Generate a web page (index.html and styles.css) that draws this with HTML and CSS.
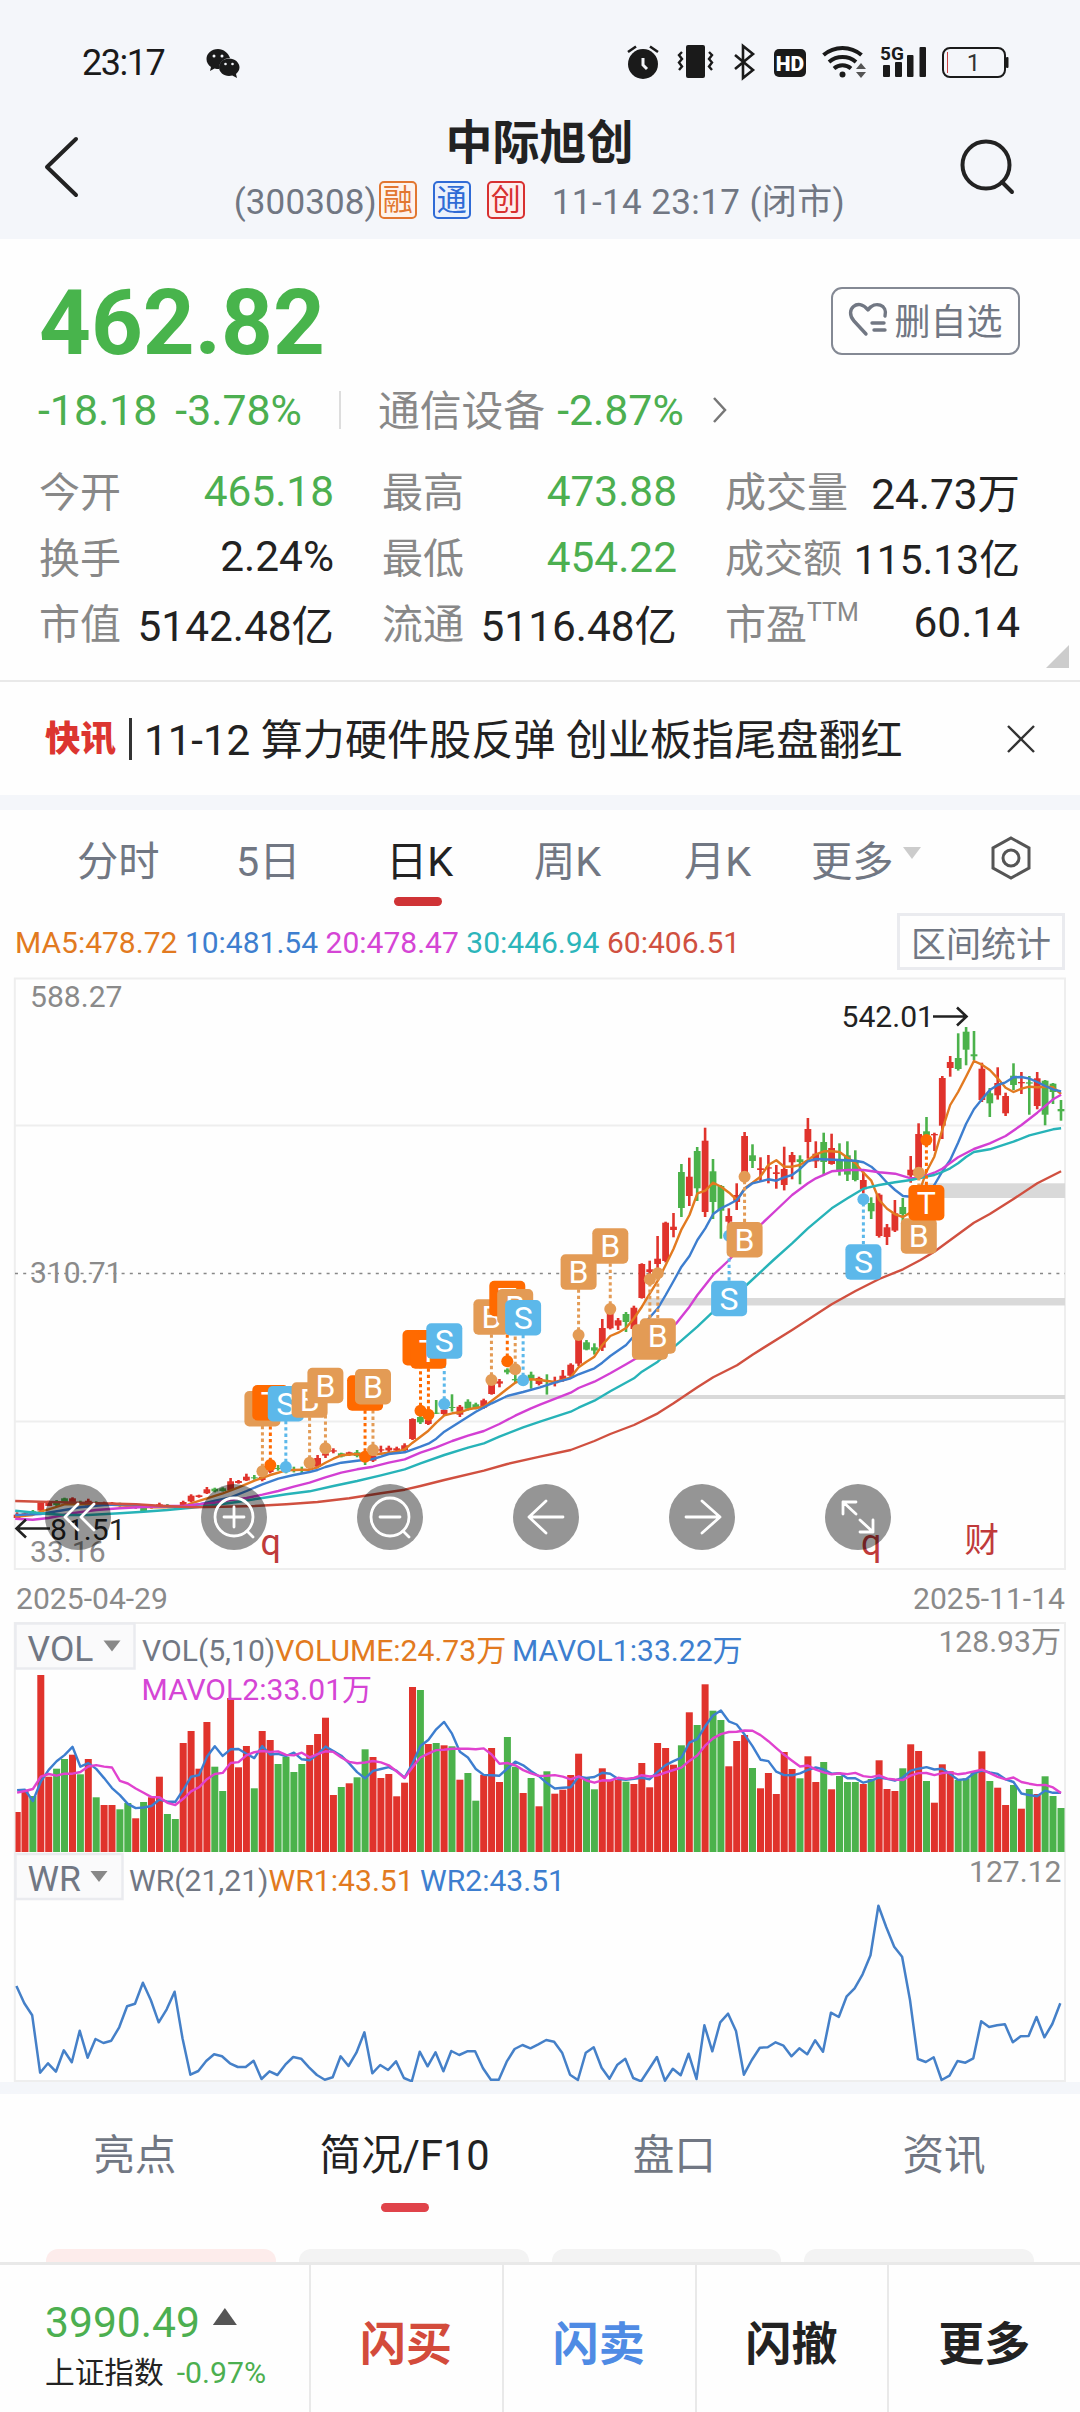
FILE: index.html
```html
<!DOCTYPE html>
<html lang="zh-CN">
<head>
<meta charset="utf-8">
<title>中际旭创 300308</title>
<link rel="stylesheet" href="styles.css">
</head>
<body>
<div class="app">
  <header class="top">
    <div class="status">
      <span class="clock">23:17</span>
      <svg class="wechat" width="34" height="30" viewBox="0 0 34 30">
        <path fill="#1a1a1a" d="M12 1C5.500 1 .5 5.500.5 11c0 3.500 1.800 6 4.500 8l-1 4 4.500-2.500c1.500.4 3 .5 4.500.5 0-7 5-11 11-11C22.500 5 17.500 1 12 1z"/>
        <path fill="#1a1a1a" d="M23 10.500c-5.500 0-10 4-10 8.800s4.500 8.700 10 8.700c1.200 0 2.300-.2 3.300-.5L31 30l-1-4c2-1.600 3.500-4 3.500-6.700 0-4.800-4.800-8.800-10.500-8.800z"/>
        <g fill="#f4f6fa"><circle cx="8" cy="8" r="1.500"/><circle cx="16" cy="8" r="1.500"/><circle cx="19.500" cy="16" r="1.300"/><circle cx="26.500" cy="16" r="1.300"/></g>
      </svg>
      <svg class="sysicons" width="390" height="40" viewBox="622 42 390 40">
        <g fill="#1a1a1a">
          <circle cx="643" cy="64" r="15"/>
          <path d="M686 47q0-2 2-2h15q2 0 2 2v29q0 2-2 2h-15q-2 0-2-2z"/>
          <rect x="774" y="49" width="32" height="28" rx="5"/>
          <circle cx="842.500" cy="74.500" r="3"/>
          <rect x="883" y="65" width="7" height="12" rx="1"/><rect x="895" y="62" width="7" height="15" rx="1"/><rect x="907" y="55" width="6.500" height="22" rx="1"/><rect x="919.500" y="47" width="6.500" height="30" rx="1"/>
          <rect x="1006" y="57" width="2.500" height="11" rx="1"/>
        </g>
        <path fill="none" stroke="#f4f6fa" stroke-width="3" d="M643 58v7l4 4"/>
        <g fill="none" stroke="#1a1a1a" stroke-width="2.600">
          <path d="M628 52l8-5.500M658 52l-8-5.500"/>
          <path d="M682 52l-3 3 3 4-3 3.500 3 4-3 3.500M709 52l3 3-3 4 3 3.500-3 4 3 3.500" stroke-width="2.400"/>
          <path d="M735 55l18 15-10 8V46l10 8-18 15" stroke-width="2.600"/>
          <path d="M823.500 55a29 29 0 0 1 38 0" stroke-width="4"/><path d="M829 62a21 21 0 0 1 27 0" stroke-width="4"/><path d="M834 68.500a13 13 0 0 1 17 0" stroke-width="4"/>
          <rect x="943" y="48" width="62" height="29" rx="7" stroke-width="2"/>
        </g>
        <path fill="#555" d="M856 69l5-6 5 6zM856 72h10l-5 6z"/>
        <path stroke="#c44" d="M947.500 52v21"/>
        <text class="hd" x="790" y="70.500" text-anchor="middle">HD</text>
        <text class="g5" x="880" y="59.500">5G</text>
        <text class="bat" x="973.500" y="71" text-anchor="middle">1</text>
      </svg>
    </div>
    <div class="titlebar">
      <svg class="back" width="36" height="64" viewBox="0 0 36 64"><path d="M33 4L4 32l29 28" fill="none" stroke="#222" stroke-width="4" stroke-linecap="round" stroke-linejoin="round"/></svg>
      <div class="titles">
        <h1>中际旭创</h1>
        <div class="sub"><span>(300308)</span><i class="tag or">融</i><i class="tag bl">通</i><i class="tag rd">创</i><span class="when">11-14 23:17 (闭市)</span></div>
      </div>
      <svg class="search" width="56" height="56" viewBox="0 0 56 56"><g fill="none" stroke="#222" stroke-width="4" stroke-linecap="round"><circle cx="26" cy="26" r="23.500"/><path d="M42 43l10 10"/></g></svg>
    </div>
  </header>

  <section class="quote">
    <div class="price-row">
      <span class="price">462.82</span>
      <button class="watch"><svg width="42" height="36" viewBox="0 0 42 36"><path d="M18 33L6 20C-4 9 10-4 20 9C27-1 40 4 37 15M24 22h12M26 29h11" fill="none" stroke="#717783" stroke-width="3.400" stroke-linecap="round" stroke-linejoin="round"/></svg>删自选</button>
    </div>
    <div class="change-row">
      <span class="gr">-18.18</span><span class="gr pct">-3.78%</span><i class="vline"></i><span class="lab">通信设备</span><span class="gr sec">-2.87%</span>
      <svg width="16" height="28" viewBox="0 0 16 28"><path d="M2 2l11 12L2 26" fill="none" stroke="#777" stroke-width="2.500"/></svg>
    </div>
    <div class="grid">
      <div><label>今开</label><b class="gr">465.18</b></div><div><label>最高</label><b class="gr">473.88</b></div><div><label>成交量</label><b>24.73万</b></div>
      <div><label>换手</label><b>2.24%</b></div><div><label>最低</label><b class="gr">454.22</b></div><div><label class="tight">成交额</label><b class="tight-num">115.13亿</b></div>
      <div><label>市值</label><b>5142.48亿</b></div><div><label>流通</label><b>5116.48亿</b></div><div><label>市盈<sup>TTM</sup></label><b>60.14</b></div>
    </div>
    <i class="corner"></i>
  </section>

  <section class="news">
    <em>快讯</em><i></i><p>11-12 算力硬件股反弹 创业板指尾盘翻红</p>
    <svg width="28" height="28" viewBox="0 0 28 28"><path d="M1 1l26 26M27 1L1 27" stroke="#333" stroke-width="2.400"/></svg>
  </section>

  <nav class="periods">
    <span>分时</span><span>5日</span><span class="on">日K</span><span>周K</span><span>月K</span><span class="more">更多<i></i></span>
    <svg width="42" height="44" viewBox="0 0 42 44"><g fill="none" stroke="#555" stroke-width="3"><path d="M21 2l18 10v20L21 42 3 32V12z"/><circle cx="21" cy="22" r="8"/></g></svg>
  </nav>
  <div class="ma-row">
    <span class="c5">MA5:478.72</span><span class="c10">10:481.54</span><span class="c20">20:478.47</span><span class="c30">30:446.94</span><span class="c60">60:406.51</span>
    <button>区间统计</button>
  </div>

  <section class="kline">
    <svg id="kline" width="1080" height="601" viewBox="0 970 1080 601"></svg>
    <div class="tools">
      <svg viewBox="0 0 66 66"><path d="M33 20L20 33l13 13M49 20L36 33l13 13"/></svg>
      <svg viewBox="0 0 66 66"><circle cx="33" cy="33" r="19"/><path d="M23 33h20M33 23v20M46 47l6 6"/></svg>
      <svg viewBox="0 0 66 66"><circle cx="33" cy="33" r="19"/><path d="M23 33h20M46 47l6 6"/></svg>
      <svg viewBox="0 0 66 66"><path d="M50 33H16M33 17L16 33l17 16"/></svg>
      <svg viewBox="0 0 66 66"><path d="M17 33h34M33 17l18 16-18 16"/></svg>
      <svg viewBox="0 0 66 66"><path d="M31 30L18 18M31 18H18v12M35 36l13 12M35 48h13V36"/></svg>
    </div>
  </section>
  <div class="dates"><span>2025-04-29</span><span>2025-11-14</span></div>
  <svg id="vol" width="1080" height="230" viewBox="0 1622 1080 230"></svg>
  <svg id="wr" width="1080" height="230" viewBox="0 1852 1080 230"></svg>

  <nav class="info"><span>亮点</span><span class="on">简况/F10</span><span>盘口</span><span>资讯</span></nav>
  <div class="cards"><i class="sel"></i><i></i><i></i><i></i></div>

  <footer class="bar">
    <div class="index"><div><b>3990.49</b><i></i></div><div><small>上证指数</small><u>-0.97%</u></div></div>
    <span class="buy">闪买</span><span class="sell">闪卖</span><span>闪撤</span><span>更多</span>
  </footer>
</div>
<script src="chart.js"></script>
</body>
</html>
```
FILE: styles.css
```css
* { box-sizing: border-box; }
body { margin: 0; background: #fefefe; font-family: Roboto, "Noto Sans CJK SC", sans-serif; color: #222; }
.app { width: 1080px; height: 2412px; overflow: hidden; display: flex; flex-direction: column; background: #fefefe; }
.app > * { flex: none; }
svg { display: block; }
i, em { font-style: normal; }
.gr { color: #4caf50; }

.top { height: 239px; background: #f4f6fa; }
.status { height: 104px; padding: 11px 0 0 82px; display: flex; align-items: center; }
.status .clock { font-size: 36px; line-height: 40px; width: 124px; letter-spacing: -1.5px; margin-top: 11px; color: #1a1a1a; }
.wechat { margin-top: 10px; }
.sysicons { margin: 8px 0 0 382px; }
.hd { font: 900 21px Roboto, sans-serif; fill: #fff; }
.g5 { font: 700 19px Roboto, sans-serif; fill: #1a1a1a; }
.bat { font: 24px Roboto, sans-serif; fill: #333; }
.titlebar { display: flex; align-items: flex-start; height: 135px; padding: 0 64px 0 43px; justify-content: space-between; }
.back { margin-top: 31px; }
.search { margin-top: 35px; }
.titles { width: 660px; display: flex; flex-direction: column; align-items: center; margin-left: 40px; }
h1 { margin: 8px 0 0; font-size: 47px; line-height: 62px; font-weight: 700; }
.sub { display: flex; align-items: center; font-size: 35px; color: #717783; line-height: 58px; white-space: nowrap; letter-spacing: .4px; }
.tag { width: 38px; height: 38px; border: 2px solid; border-radius: 5px; font-size: 30px; line-height: 33px; text-align: center; margin: -7px 16px 0 0; letter-spacing: 0; }
.sub span:first-child { margin-right: 2px; letter-spacing: .1px; }
.tag.rd { margin-right: 0; }
.or { color: #e27730; background: #fdf3ec; }
.bl { color: #2f6bd6; background: #eaf1fc; }
.rd { color: #d8302f; background: #fdeeee; }
.when { margin-left: 27px; }

.quote { height: 441px; padding: 40px 60px 0 38px; position: relative; }
.price-row { display: flex; justify-content: space-between; height: 90px; padding-left: 1px; }
.price { font-size: 90.500px; line-height: 88px; font-weight: 700; color: #48b44c; }
.watch { width: 189px; height: 68px; margin-top: 8px; border: 2px solid #848994; border-radius: 11px; background: none; display: flex; align-items: center; justify-content: center; gap: 4px; padding: 0 0 4px; font: 36px "Noto Sans CJK SC", sans-serif; color: #717783; }
.change-row { display: flex; align-items: center; height: 60px; margin-top: 11px; font-size: 42.800px; white-space: nowrap; }
.pct { margin-left: 18px; }
.vline { width: 2px; height: 38px; background: #ddd; margin: 0 37px; }
.lab { color: #888; font-size: 41.800px; margin-top: -5px; }
.sec { margin: 0 28px 0 12px; }
.grid { display: grid; grid-template-columns: repeat(3, 294px); grid-auto-rows: 66px; column-gap: 49px; margin: 18px 0 0 2px; }
.grid > div { display: flex; justify-content: space-between; align-items: center; white-space: nowrap; }
label { color: #888; font-size: 41px; margin: -4px 0 0 -1px; }
.tight { font-size: 39px; }
.grid b { font-weight: 400; font-size: 42.400px; margin-top: -2px; }
.grid b.gr { margin-top: 0; }
.grid .tight-num { font-size: 40.800px; }
sup { font-size: 25px; vertical-align: 18px; line-height: 0; }
.corner { position: absolute; right: 11px; top: 406px; width: 23px; height: 23px; background: #ccc; clip-path: polygon(100% 0, 100% 100%, 0 100%); }

.news { height: 130px; border-top: 2px solid #e9e9e9; border-bottom: 15px solid #f4f6fa; display: flex; align-items: center; padding: 0 45px; }
.news em { color: #dc3530; font-size: 35.500px; font-weight: 900; margin-top: -6px; }
.news i { width: 3px; height: 42px; background: #333; margin: 0 12px 0 13px; }
.news p { margin: -5px 0 0; font-size: 42.100px; flex: 1; white-space: nowrap; }

.periods { height: 103px; display: flex; align-items: flex-start; padding-left: 77px; font-size: 41.300px; line-height: 60px; color: #717783; white-space: nowrap; }
.periods > * { position: relative; margin-top: 22px; }
.periods span:nth-child(1) { width: 159px; }
.periods span:nth-child(2) { width: 150px; }
.periods span:nth-child(3) { width: 148px; }
.periods span:nth-child(4) { width: 150px; }
.periods span:nth-child(5) { width: 127px; }
.periods .more { width: 179px; }
.more i { position: absolute; left: 92px; top: 15px; width: 18px; height: 12px; background: #ccc; clip-path: polygon(0 0, 100% 0, 50% 100%); }
.periods svg { margin-top: 26px; }
.periods .on, .info .on { color: #222; position: relative; }
.periods .on::after { content: ""; position: absolute; left: 8px; top: 65px; width: 48px; height: 9px; border-radius: 5px; background: #cf3336; }
.ma-row { height: 57px; display: flex; align-items: center; padding: 0 15px; gap: 7.500px; font-size: 30px; }
.ma-row span { margin-top: 2px; }
.ma-row button { margin-left: auto; width: 168px; height: 57px; border: 3px solid #eaebef; background: none; font: 35px "Noto Sans CJK SC", sans-serif; color: #717783; padding: 0 0 1px; white-space: nowrap; }
.c5 { color: #e27a20; } .c10 { color: #3d7ecf; } .c20 { color: #d545d5; } .c30 { color: #2bb5ba; } .c60 { color: #d05040; }

.kline { height: 602px; position: relative; }
.tools { position: absolute; left: 45px; top: 514px; display: flex; gap: 90px; }
.tools svg { width: 66px; height: 66px; border-radius: 50%; background: rgba(0,0,0,.41); fill: none; stroke: #fff; stroke-width: 2.800px; stroke-linecap: round; stroke-linejoin: round; }
.dates { height: 50px; padding: 2px 15px 0 16px; display: flex; justify-content: space-between; align-items: center; font-size: 30.100px; color: #8a8a8a; }
.t { font-size: 30.100px; }
.q { font-size: 36px; fill: #c03a3a; }
.m { font-size: 32px; fill: #fff; text-anchor: middle; }

.info { height: 155px; border-top: 12px solid #f4f6fa; display: flex; font-size: 41.600px; line-height: 60px; color: #717783; padding: 32px 1px 0 0; }
.info span { flex: 1; text-align: center; }
.info .on::after { content: ""; position: absolute; left: 111px; top: 77px; width: 48px; height: 9px; border-radius: 5px; background: #e0434a; }
.cards { height: 25px; padding: 12px 46px 0; display: flex; gap: 23px; overflow: hidden; }
.cards i { flex: 1; height: 40px; border-radius: 12px; background: #f3f3f3; }
.cards .sel { background: #fdeceb; }

.bar { height: 150px; border-top: 3px solid #e9e9e9; display: flex; }
.bar > span { flex: 1; border-left: 2px solid #e9e9e9; display: flex; align-items: center; justify-content: center; font-size: 46px; font-weight: 700; padding: 3px 1px 0 0; }
.index { width: 309px; padding: 29px 0 0 45px; }
.index > div { display: flex; align-items: center; white-space: nowrap; }
.index b { font-weight: 400; font-size: 42.600px; line-height: 56px; color: #4caf50; }
.index i { width: 24px; height: 17px; background: #555; margin: -11px 0 0 13px; clip-path: polygon(50% 0, 100% 100%, 0 100%); }
.index small { font-size: 29.700px; line-height: 46px; }
.index u { text-decoration: none; font-size: 30.200px; line-height: 46px; color: #4caf50; margin-left: 13px; }
.buy { color: #d34b3b; } .sell { color: #4f8be4; }
```
FILE: chart.js
```js
// Days are laid out on an even pitch; heights below are in thirds of a pixel.
const RED = '#e0332c', GREEN = '#4bb24b', K = 2.9037;
const dayX = i => 17.1 + i * 7.908;
const ux = u => u / K, uy = u => 970 + u / 3;
const rect = (x, y, w, h, f, r = 0) => `<rect x="${x.toFixed(1)}" y="${y.toFixed(1)}" width="${w}" height="${h.toFixed(1)}" rx="${r}" fill="${f}"/>`;
const line = (pts, c, w = 2.4) => `<polyline fill="none" stroke="${c}" stroke-width="${w}" stroke-linejoin="round" points="${pts.map(p => p[0].toFixed(1) + ',' + p[1].toFixed(1)).join(' ')}"/>`;
const text = (x, y, s, f, extra = 'class="t"') => `<text x="${x}" y="${y}" fill="${f}" ${extra}>${s}</text>`;
const pairs = s => { const a = s.trim().split(/[\s,]+/).map(Number), o = []; for (let i = 0; i < a.length; i += 2) o.push([a[i], a[i + 1]]); return o; };

const colors = 'RRGRRGGRGRGRRGGRGRRGGRRRRGGRRRGRRGGGGRRRRGRGGRRRRRRGRGRGRGGRRRGGRGRGRRRRGGRRRGRRRRRRGRGRGGRRRGRRRRRGRRGRGGGRGRRRGRRGRRRGGGRGRRGRGRGG';

// high, body top, body bottom, low
const candles = `1627 1634 1644 1646|1627 1630 1636 1638|1620 1624 1632 1634|1594 1597 1622 1624|1592 1598 1608 1608|1590 1593 1605 1608|1583 1585 1596 1598|1582 1585 1600 1605|1592 1596 1603 1605|1586 1592 1606 1608|1594 1598 1605 1607|1595 1598 1605 1607|1596 1598 1604 1606|1598 1601 1608 1610|1601 1604 1609 1611|1601 1605 1614 1616|1606 1610 1623 1625|1606 1608 1614 1616|1598 1603 1611 1613|1602 1605 1611 1613|1605 1608 1614 1616|1592 1596 1611 1613|1573 1577 1594 1596|1574 1576 1581 1583|1551 1558 1570 1572|1553 1556 1564 1567|1552 1555 1563 1565|1524 1534 1560 1562|1530 1533 1539 1541|1511 1520 1531 1533|1515 1522 1524 1529|1515 1520 1530 1534|1495 1500 1506 1510|1485 1494 1497 1502|1495 1498 1500 1510|1490 1497 1502 1507|1490 1497 1503 1512|1478 1484 1494 1498|1455 1464 1490 1495|1445 1450 1457 1464|1435 1441 1445 1450|1448 1450 1460 1462|1445 1447 1455 1458|1440 1447 1458 1462|1460 1465 1473 1485|1450 1458 1472 1476|1427 1438 1442 1448|1427 1433 1441 1450|1430 1435 1442 1448|1420 1426 1441 1448|1345 1347 1407 1410|1335 1341 1357 1362|1345 1349 1362 1365|1290 1328 1330 1332|1315 1319 1332 1338|1273 1311 1314 1325|1305 1310 1334 1341|1288 1295 1316 1322|1298 1303 1314 1318|1286 1291 1313 1316|1235 1244 1272 1274|1227 1234 1241 1252|1195 1199 1207 1213|1210 1227 1231 1240|1222 1225 1240 1244|1205 1214 1228 1256|1220 1224 1242 1246|1213 1230 1236 1274|1220 1234 1240 1249|1200 1217 1232 1235|1180 1184 1217 1222|1100 1108 1181 1188|1110 1117 1139 1141|1120 1132 1142 1154|1047 1074 1133 1143|1025 1030 1075 1078|1044 1051 1067 1080|1026 1032 1056 1086|1007 1013 1077 1082|880 882 984 986|872 898 906 915|798 866 882 925|755 758 873 877|729 770 780 802|582 606 714 741|563 620 678 708|531 543 655 693|473 512 726 741|567 604 696 747|645 648 722 806|715 738 755 800|640 675 696 720|486 498 610 625|523 556 573 594|562 595 600 636|555 592 596 640|585 607 612 656|530 597 645 661|546 555 577 628|556 568 576 643|444 477 516 566|514 551 574 594|488 516 576 614|491 534 582 584|520 572 600 617|514 556 614 633|541 570 630 634|605 630 658 670|682 699 724 747|670 674 798 803|762 772 801 825|690 730 782 786|684 711 732 755|558 599 616 638|460 492 600 610|441 484 495 520|488 492 496 543|318 324 467 507|258 276 294 320|190 264 297 302|171 185 239 286|183 253 259 270|278 296 390 396|354 370 400 441|292 339 376 389|368 378 430 438|280 317 345 360|306 336 340 372|318 337 341 434|306 325 408 418|330 332 434 466|339 341 366 402|390 417 424 452`.split('|').map(s => s.split(' ').map(Number));

const averages = [
  ['#e27a20', `44 1640 95 1635 118 1625 141 1618 187 1603 233 1603 302 1603 348 1606 394 1609 440 1612 509 1612 532 1610 555 1600 601 1585 647 1570 693 1552 739 1532 785 1515 831 1501 876 1499 899 1499 922 1492 945 1478 968 1466 991 1456 1037 1452 1060 1456 1083 1454 1106 1451 1152 1445 1175 1438 1198 1418 1221 1400 1244 1382 1267 1358 1290 1336 1313 1330 1336 1327 1359 1318 1405 1310 1428 1292 1450 1275 1473 1256 1496 1238 1519 1230 1542 1228 1568 1230 1611 1236 1634 1230 1657 1222 1680 1192 1703 1175 1726 1160 1749 1125 1772 1098 1795 1088 1818 1074 1841 1045 1864 1010 1887 970 1910 932 1933 885 1956 836 1979 778 2002 735 2025 670 2048 662 2071 638 2094 650 2117 668 2140 690 2162 655 2185 638 2208 620 2231 585 2254 571 2277 590 2300 590 2323 585 2346 570 2369 553 2392 544 2415 544 2438 546 2461 563 2484 580 2507 608 2530 632 2553 690 2576 716 2599 733 2622 741 2645 727 2668 670 2690 605 2713 560 2736 480 2759 405 2782 366 2805 320 2828 273 2851 284 2874 300 2897 325 2920 353 2943 366 2966 356 2989 350 3012 352 3035 350 3058 352 3081 372`],
  ['#3d7ecf', `44 1635 118 1632 187 1620 233 1612 302 1605 371 1603 440 1608 532 1610 578 1603 624 1592 670 1582 716 1563 762 1543 808 1526 853 1515 899 1506 922 1500 945 1491 991 1478 1037 1472 1083 1467 1106 1460 1129 1452 1175 1447 1221 1430 1244 1421 1267 1406 1290 1385 1336 1355 1382 1325 1428 1300 1473 1278 1519 1266 1568 1252 1611 1238 1657 1225 1680 1213 1726 1195 1749 1178 1772 1158 1818 1125 1841 1098 1864 1070 1887 1042 1910 1015 1933 975 1956 933 1979 890 2002 858 2025 810 2048 775 2071 732 2094 715 2117 703 2140 690 2162 658 2185 640 2208 634 2231 628 2254 632 2277 622 2300 615 2323 597 2346 574 2369 567 2438 570 2484 572 2507 577 2530 590 2553 612 2576 638 2599 660 2622 678 2645 680 2690 672 2713 645 2736 605 2759 570 2782 518 2805 462 2828 418 2851 388 2874 360 2897 345 2920 337 2943 322 2966 321 2989 326 3012 336 3035 348 3058 358 3081 364`],
  ['#d33fd3', `44 1646 95 1649 141 1644 210 1630 279 1620 348 1615 417 1611 486 1608 532 1608 578 1603 624 1598 670 1590 716 1584 762 1574 808 1563 853 1550 899 1538 945 1522 991 1508 1037 1498 1083 1490 1129 1478 1175 1468 1221 1448 1267 1432 1313 1413 1359 1397 1405 1383 1450 1362 1496 1337 1542 1315 1568 1304 1657 1268 1680 1254 1726 1235 1772 1210 1818 1183 1848 1165 1910 1110 1933 1085 1964 1060 1979 1040 2002 1010 2025 975 2048 945 2071 915 2117 870 2162 815 2208 765 2254 720 2300 675 2346 640 2369 625 2415 604 2461 600 2507 600 2553 607 2599 611 2645 625 2668 625 2713 608 2736 596 2782 562 2828 537 2874 520 2920 498 2966 465 3012 428 3058 388 3081 374`],
  ['#27b3b8', `44 1622 118 1630 187 1635 256 1635 348 1630 417 1625 486 1620 555 1613 624 1605 693 1595 762 1584 831 1573 899 1564 968 1548 1037 1533 1106 1516 1175 1498 1221 1480 1290 1455 1359 1433 1405 1420 1450 1400 1519 1372 1568 1355 1657 1325 1680 1313 1726 1292 1772 1264 1841 1225 1864 1205 1910 1175 1956 1132 2025 1070 2071 1025 2168 945 2246 870 2300 820 2346 775 2415 715 2461 685 2507 656 2553 645 2599 637 2645 630 2690 620 2713 615 2736 606 2759 595 2782 580 2805 561 2828 546 2874 538 2943 515 2989 496 3058 478 3081 475`],
  ['#d05040', `44 1593 118 1595 256 1599 394 1603 463 1607 555 1612 647 1610 739 1608 831 1603 922 1596 1014 1585 1106 1570 1175 1559 1221 1548 1290 1530 1405 1502 1473 1482 1568 1460 1657 1440 1726 1413 1772 1392 1841 1365 1910 1330 1956 1300 2025 1252 2071 1222 2140 1186 2185 1154 2300 1080 2415 1003 2484 963 2553 927 2622 898 2673 870 2713 845 2828 758 2874 732 2943 687 3012 640 3081 604`]
];

const MARK = { B: '#e39b55', T: '#ff6a00', S: '#5cb8ea' };
// kind, centre x, box top, dot y
const marks = [
  ['B', 762, 1263, 1504], ['T', 785, 1245, 1485], ['S', 830, 1248, 1491], ['B', 899, 1237, 1478], ['B', 945, 1193, 1435],
  ['T', 1060, 1216, 1460], ['B', 1083, 1197, 1440], ['T', 1221, 1080, 1322], ['T', 1244, 1090, 1334], ['S', 1290, 1060, 1302],
  ['B', 1427, 988, 1230], ['T', 1473, 932, 1174], ['B', 1496, 957, 1198], ['S', 1519, 990, 1231],
  ['B', 1680, 853, 1095], ['B', 1772, 775, 1017], ['B', 1887, 1063, 928], ['B', 1910, 1045, 910],
  ['S', 2117, 932, 797], ['B', 2162, 756, 620], ['S', 2507, 823, 688], ['B', 2668, 745, 608], ['T', 2690, 645, 510]
];

function drawKline() {
  let s = '<g fill="none" stroke="#eee" stroke-width="2"><path d="M14.800 978.500H1065V1569H14.800zM15 1125.500H1065M15 1421.500H1065"/></g>';
  s += rect(505, 1395, 560, 4, '#d9d9d9') + rect(644, 1298, 421, 7.5, '#d9d9d9') + rect(920, 1183.300, 145, 14.700, '#d9d9d9');
  s += '<path d="M15 1273.500H1065" stroke="#888" stroke-width="1.500" stroke-dasharray="3 5.200"/>';
  s += text(30, 1007, '588.27', '#8a8a8a') + text(30, 1282.500, '310.71', '#8a8a8a') + text(30, 1562, '33.16', '#8a8a8a');
  candles.forEach(([h, t, b, l], i) => {
    const c = colors[i] === 'R' ? RED : GREEN, x = dayX(i);
    s += rect(x - 1.3, uy(h), 2.6, (l - h) / 3, c) + rect(x - 3.4, uy(t), 6.800, Math.max(1, (b - t) / 3), c);
  });
  averages.forEach(([c, p]) => { s += line(pairs(p).map(([x, y]) => [ux(x), uy(y)]), c); });
  s += text(841.500, 1027, '542.01', '#222') + text(50, 1540, '81.51', '#222');
  s += '<path fill="none" stroke="#222" stroke-width="2.600" d="M933 1016.500h33M957 1007.500l9.500 9-9.500 9M50 1528.500H17M26 1519.500l-9.500 9 9.500 9"/>';
  s += text(260.500, 1555, 'q', '', 'class="q"') + text(861, 1555, 'q', '', 'class="q"') + text(964.500, 1552, '财', '', 'class="q" style="font-size:34.500px"');
  marks.forEach(([k, cx, top, dot]) => {
    const x = ux(cx), y1 = uy(top > dot ? top : top + 105);
    s += `<path d="M${x} ${y1}V${uy(dot)}" stroke="${MARK[k]}" stroke-width="3" stroke-dasharray="3.300 3"/><circle cx="${x}" cy="${uy(dot)}" r="6" fill="${MARK[k]}"/>`;
  });
  marks.forEach(([k, cx, top]) => {
    const x = ux(cx), y = uy(top);
    s += rect(x - 18, y, 36, 35.500, MARK[k], 5) + text(x, y + 29, k, '#fff', 'class="m"');
  });
  document.getElementById('kline').innerHTML = s;
}

// Bar tops measured downwards from the top of the volume pane; the floor is 756.
const tops = [636,570,588,225,530,506,477,464,523,477,592,615,615,628,609,655,606,592,530,642,657,429,393,506,366,500,573,294,502,438,565,393,420,492,470,516,492,435,402,353,585,561,550,532,448,471,534,522,589,548,261,270,432,429,436,439,539,519,602,524,444,546,411,500,579,534,619,514,581,569,525,461,532,568,505,540,540,545,552,489,562,429,444,494,436,337,375,253,332,360,499,423,405,504,565,519,582,456,507,535,469,546,486,568,528,546,546,552,537,481,567,573,505,433,453,543,608,493,514,540,535,514,454,543,563,615,555,626,567,582,529,588,624];
const movingAvg = (n, lead) => tops.map((_, i) => i < n - 1 ? lead[i] : tops.slice(i - n + 1, i + 1).reduce((a, b) => a + b) / n);

function drawVol() {
  let s = '<path fill="none" stroke="#eee" stroke-width="2" d="M14.800 1852V1623H1065V1852"/>';
  s += tops.map((t, i) => rect(Math.max(15.5, dayX(i) - 3.5), 1600 + t / 3, i ? 7 : 5.2, (756 - t) / 3, colors[i] === 'R' ? RED : GREEN)).join('');
  const series = v => v.map((y, i) => [dayX(i), 1600 + y / 3]);
  s += line(series(movingAvg(5, [571, 569, 603, 545])), '#3d7ecf') + line(series(movingAvg(10, [578, 573, 567, 530, 522, 527, 521, 521, 516])), '#e042cf');
  s += '<rect x="15.500" y="1623.500" width="119" height="45" fill="#fafafb" stroke="#eaebef" stroke-width="2.500"/>';
  s += text(27.500, 1661, 'VOL', '#717783', 'font-size="35.500"') + '<path fill="#888" d="M103.500 1640.500h17l-8.500 11z"/>';
  s += `<text x="142" y="1661" class="t"><tspan fill="#717783">VOL(5,10)</tspan><tspan fill="#e27a20">VOLUME:24.73万</tspan><tspan fill="#3d7ecf" x="512">MAVOL1:33.22万</tspan></text>`;
  s += text(141.500, 1700, 'MAVOL2:33.01万', '#d545d5') + text(1061, 1652, '128.93万', '#8a8a8a', 'class="t" text-anchor="end"');
  document.getElementById('vol').innerHTML = s;
}

const wr = [408,460,496,668,640,665,601,637,542,623,567,579,572,532,469,461,398,450,517,478,425,565,674,663,633,613,619,640,651,651,632,687,664,675,644,621,626,652,675,689,682,619,648,608,547,670,645,660,634,684,694,605,649,607,664,603,615,604,604,655,689,689,635,597,585,595,583,570,575,608,674,690,608,592,653,686,644,626,684,694,658,621,692,656,676,611,687,526,604,517,491,543,674,630,593,592,577,587,619,595,613,571,605,488,501,439,415,373,316,167,232,290,320,450,627,636,622,690,677,633,638,625,514,531,526,523,577,559,558,501,562,522,460];

function drawWr() {
  let s = '<path fill="none" stroke="#eee" stroke-width="2" d="M14.800 1852V2081H1065V1852"/>';
  s += line(wr.map((y, i) => [dayX(i) - .7, 1850 + y / 3]), '#4580c8', 2.5);
  s += '<rect x="15.500" y="1854" width="107" height="45" fill="#fafafb" stroke="#eaebef" stroke-width="2.500"/>';
  s += text(27.500, 1891, 'WR', '#717783', 'font-size="35.500"') + '<path fill="#888" d="M90.500 1871h17l-8.500 11z"/>';
  s += '<text x="129" y="1891" class="t"><tspan fill="#717783">WR(21,21)</tspan><tspan fill="#e27a20">WR1:43.51</tspan><tspan fill="#3d7ecf" x="420">WR2:43.51</tspan></text>';
  s += text(1061.500, 1882, '127.12', '#8a8a8a', 'class="t" text-anchor="end"');
  document.getElementById('wr').innerHTML = s;
}

drawKline();
drawVol();
drawWr();
```
